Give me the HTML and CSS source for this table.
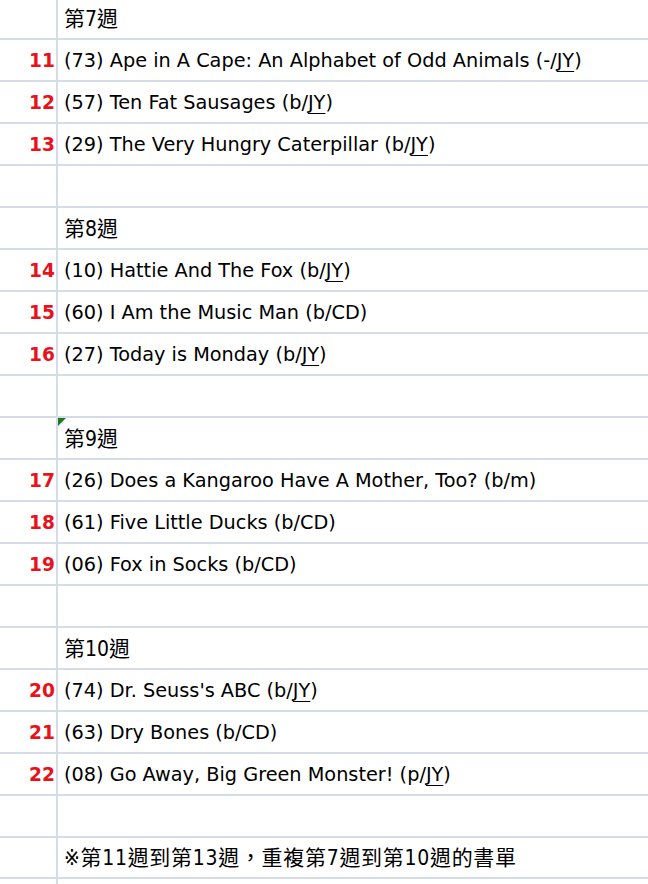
FILE: index.html
```html
<!DOCTYPE html>
<html>
<head>
<meta charset="utf-8">
<link rel="stylesheet" href="styles.css">
</head>
<body>
<div class="sheet">
  <div class="row first"><div class="num"></div><div class="cell cjk">第7週</div></div>
  <div class="row"><div class="num">11</div><div class="cell">(73) Ape in A Cape: An Alphabet of Odd Animals (-/<u>JY</u>)</div></div>
  <div class="row"><div class="num">12</div><div class="cell">(57) Ten Fat Sausages (b/<u>JY</u>)</div></div>
  <div class="row"><div class="num">13</div><div class="cell">(29) The Very Hungry Caterpillar (b/<u>JY</u>)</div></div>
  <div class="row"><div class="num"></div><div class="cell"></div></div>
  <div class="row"><div class="num"></div><div class="cell cjk">第8週</div></div>
  <div class="row"><div class="num">14</div><div class="cell">(10) Hattie And The Fox (b/<u>JY</u>)</div></div>
  <div class="row"><div class="num">15</div><div class="cell">(60) I Am the Music Man (b/CD)</div></div>
  <div class="row"><div class="num">16</div><div class="cell">(27) Today is Monday (b/<u>JY</u>)</div></div>
  <div class="row"><div class="num"></div><div class="cell"></div></div>
  <div class="row"><div class="num"></div><div class="cell cjk marked">第9週</div></div>
  <div class="row"><div class="num">17</div><div class="cell">(26) Does a Kangaroo Have A Mother, Too? (b/m)</div></div>
  <div class="row"><div class="num">18</div><div class="cell">(61) Five Little Ducks (b/CD)</div></div>
  <div class="row"><div class="num">19</div><div class="cell">(06) Fox in Socks (b/CD)</div></div>
  <div class="row"><div class="num"></div><div class="cell"></div></div>
  <div class="row"><div class="num"></div><div class="cell cjk">第10週</div></div>
  <div class="row"><div class="num">20</div><div class="cell">(74) Dr. Seuss's ABC (b/<u>JY</u>)</div></div>
  <div class="row"><div class="num">21</div><div class="cell">(63) Dry Bones (b/CD)</div></div>
  <div class="row"><div class="num">22</div><div class="cell">(08) Go Away, Big Green Monster! (p/<u>JY</u>)</div></div>
  <div class="row"><div class="num"></div><div class="cell"></div></div>
  <div class="row last"><div class="num"></div><div class="cell cjk note">※第11週到第13週，重複第7週到第10週的書單</div></div>
  <div class="row"><div class="num"></div><div class="cell"></div></div>
</div>
</body>
</html>
```
FILE: styles.css
```css
html, body {
  margin: 0;
  padding: 0;
  background: #ffffff;
  overflow: hidden;
}
.sheet {
  width: 648px;
  font-family: "DejaVu Sans", sans-serif;
  font-size: 19.3px;
  color: #000;
}
.row {
  display: flex;
  height: 40px;
  border-bottom: 2px solid #d5dce8;
}
.row.first {
  height: 38px;
}
.row.last {
  height: 39px;
}
.num {
  flex: none;
  width: 55px;
  padding-right: 1px;
  border-right: 2px solid #d5dce8;
  text-align: right;
  color: #e8121c;
  font-weight: bold;
  font-family: "DejaVu Sans", sans-serif;
  font-size: 18.6px;
  line-height: 42px;
}
.cell {
  flex: 1;
  padding-left: 6px;
  line-height: 42px;
  white-space: nowrap;
  position: relative;
}
.cell u {
  text-underline-offset: 4px;
  text-decoration-thickness: 1px;
}
.cjk {
  font-family: "DejaVu Sans Condensed", "Noto Sans CJK TC", sans-serif;
  font-size: 21px;
}
.note {
  letter-spacing: 0.7px;
}
.first .cell {
  line-height: 38px;
}
.last .cell {
  line-height: 40px;
}
.marked::before {
  content: "";
  position: absolute;
  left: 0;
  top: 0;
  border-top: 8px solid #1e7a1e;
  border-right: 8px solid transparent;
}
```
